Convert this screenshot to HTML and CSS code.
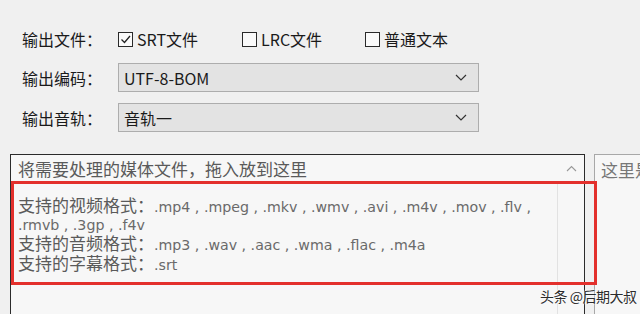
FILE: index.html
```html
<!DOCTYPE html>
<html lang="zh-CN">
<head>
  <meta charset="UTF-8">
  <title>输出设置</title>
  <link rel="stylesheet" href="styles.css">
</head>
<body>

  <div class="settings">
    <div class="row row-check">
      <span class="label">输出文件：</span>
      <label class="check">
        <span class="box">
          <svg width="13" height="13" viewBox="0 0 13 13"><path d="M2.5 6.5 L5.5 9.5 L11 3" fill="none" stroke="#222" stroke-width="1.3"/></svg>
        </span>SRT文件
      </label>
      <label class="check"><span class="box"></span>LRC文件</label>
      <label class="check"><span class="box"></span>普通文本</label>
    </div>

    <div class="row row-select">
      <span class="label">输出编码：</span>
      <div class="select">
        <span>UTF-8-BOM</span>
        <svg class="chev" width="12" height="7" viewBox="0 0 12 7"><path d="M1 1 L6 6 L11 1" fill="none" stroke="#333" stroke-width="1.2"/></svg>
      </div>
    </div>

    <div class="row row-select second">
      <span class="label">输出音轨：</span>
      <div class="select">
        <span>音轨一</span>
        <svg class="chev" width="12" height="7" viewBox="0 0 12 7"><path d="M1 1 L6 6 L11 1" fill="none" stroke="#333" stroke-width="1.2"/></svg>
      </div>
    </div>
  </div>

  <div class="panels">
    <div class="drop">
      <div class="drop-head">
        <span class="drop-title">将需要处理的媒体文件，拖入放到这里</span>
        <span class="sort">
          <svg width="11" height="7" viewBox="0 0 11 7"><path d="M1 6 L5.5 1.5 L10 6" fill="none" stroke="#999" stroke-width="1.1"/></svg>
        </span>
      </div>
      <div class="drop-body">
        <div class="formats">
          <p><span class="zh">支持的视频格式：</span>.mp4 , .mpeg , .mkv , .wmv , .avi , .m4v , .mov , .flv ,<br>.rmvb , .3gp , .f4v</p>
          <p><span class="zh">支持的音频格式：</span>.mp3 , .wav , .aac , .wma , .flac , .m4a</p>
          <p><span class="zh">支持的字幕格式：</span>.srt</p>
        </div>
        <div class="col-line"></div>
      </div>
    </div>
    <div class="side">
      <span class="side-title">这里是</span>
    </div>
  </div>

  <div class="highlight"></div>
  <div class="watermark">头条 @后期大叔</div>

</body>
</html>
```

FILE: styles.css
```css
body {
  margin: 0;
  width: 640px;
  height: 314px;
  overflow: hidden;
  background-color: #f0f0f0;
  color: #1a1a1a;
  font-family: 'Noto Sans CJK SC', 'Noto Sans', sans-serif;
  position: relative;
}

.settings {
  padding: 28px 0 0 22px;
}

.row {
  display: flex;
  align-items: center;
}

.label {
  width: 96px;
  font-size: 16px;
  flex-shrink: 0;
}

.row-check {
  height: 22px;
}

.check {
  display: flex;
  align-items: center;
  font-size: 16px;
  margin-right: 44px;
}

.check:nth-child(3) {
  margin-right: 43px;
}

.box {
  width: 15px;
  height: 15px;
  box-sizing: border-box;
  border: 1.5px solid #2a2a2a;
  background-color: #fafafa;
  margin-right: 4px;
  display: flex;
  align-items: center;
  justify-content: center;
}

.row-select {
  margin-top: 13px;
}

.row-select.second {
  margin-top: 11px;
}

.select {
  width: 361px;
  height: 29px;
  box-sizing: border-box;
  border: 1px solid #adadad;
  background-color: #e3e3e3;
  display: flex;
  align-items: center;
  justify-content: space-between;
  padding: 0 11px 0 5px;
  font-size: 16px;
}

.panels {
  display: flex;
  gap: 9px;
  margin-top: 22px;
  padding-left: 10px;
}

.drop {
  width: 575px;
  height: 170px;
  box-sizing: border-box;
  border: 1px solid #2b2b2b;
  background-color: #f7f7f7;
  flex-shrink: 0;
}

.drop-head {
  height: 26px;
  display: flex;
  align-items: center;
  justify-content: space-between;
  border-bottom: 1px solid #e6e6e6;
}

.drop-title {
  padding-left: 7px;
  font-size: 17px;
  color: #5a5a5a;
}

.sort {
  width: 26px;
  display: flex;
  justify-content: center;
}

.drop-body {
  display: flex;
  height: 140px;
}

.formats {
  flex: 1;
  padding: 14px 0 0 7px;
}

.formats p {
  margin: 0;
  font-family: 'DejaVu Sans', sans-serif;
  font-size: 14.2px;
  line-height: 18px;
  color: #6a6a6a;
}

.formats .zh {
  font-family: 'Noto Sans CJK SC', sans-serif;
  font-size: 17px;
  color: #5a5a5a;
}

.col-line {
  width: 26px;
  border-left: 1px solid #e2e2e2;
}

.side {
  flex: 1;
  height: 170px;
  border: 1px solid #a8a8a8;
  border-right: none;
  background-color: #f7f7f7;
  padding: 2px 0 0 6px;
  white-space: nowrap;
  overflow: hidden;
}

.side-title {
  font-size: 17px;
  color: #777;
}

/* 红框标注 */
.highlight {
  position: absolute;
  left: 11px;
  top: 181px;
  width: 580px;
  height: 98px;
  border: 3px solid #e3302c;
}

.watermark {
  position: absolute;
  left: 540px;
  top: 286px;
  font-size: 14px;
  letter-spacing: -0.5px;
  color: #2c2c2c;
  white-space: nowrap;
  text-shadow: 0 0 2px #fff, 0 0 2px #fff;
}
```
